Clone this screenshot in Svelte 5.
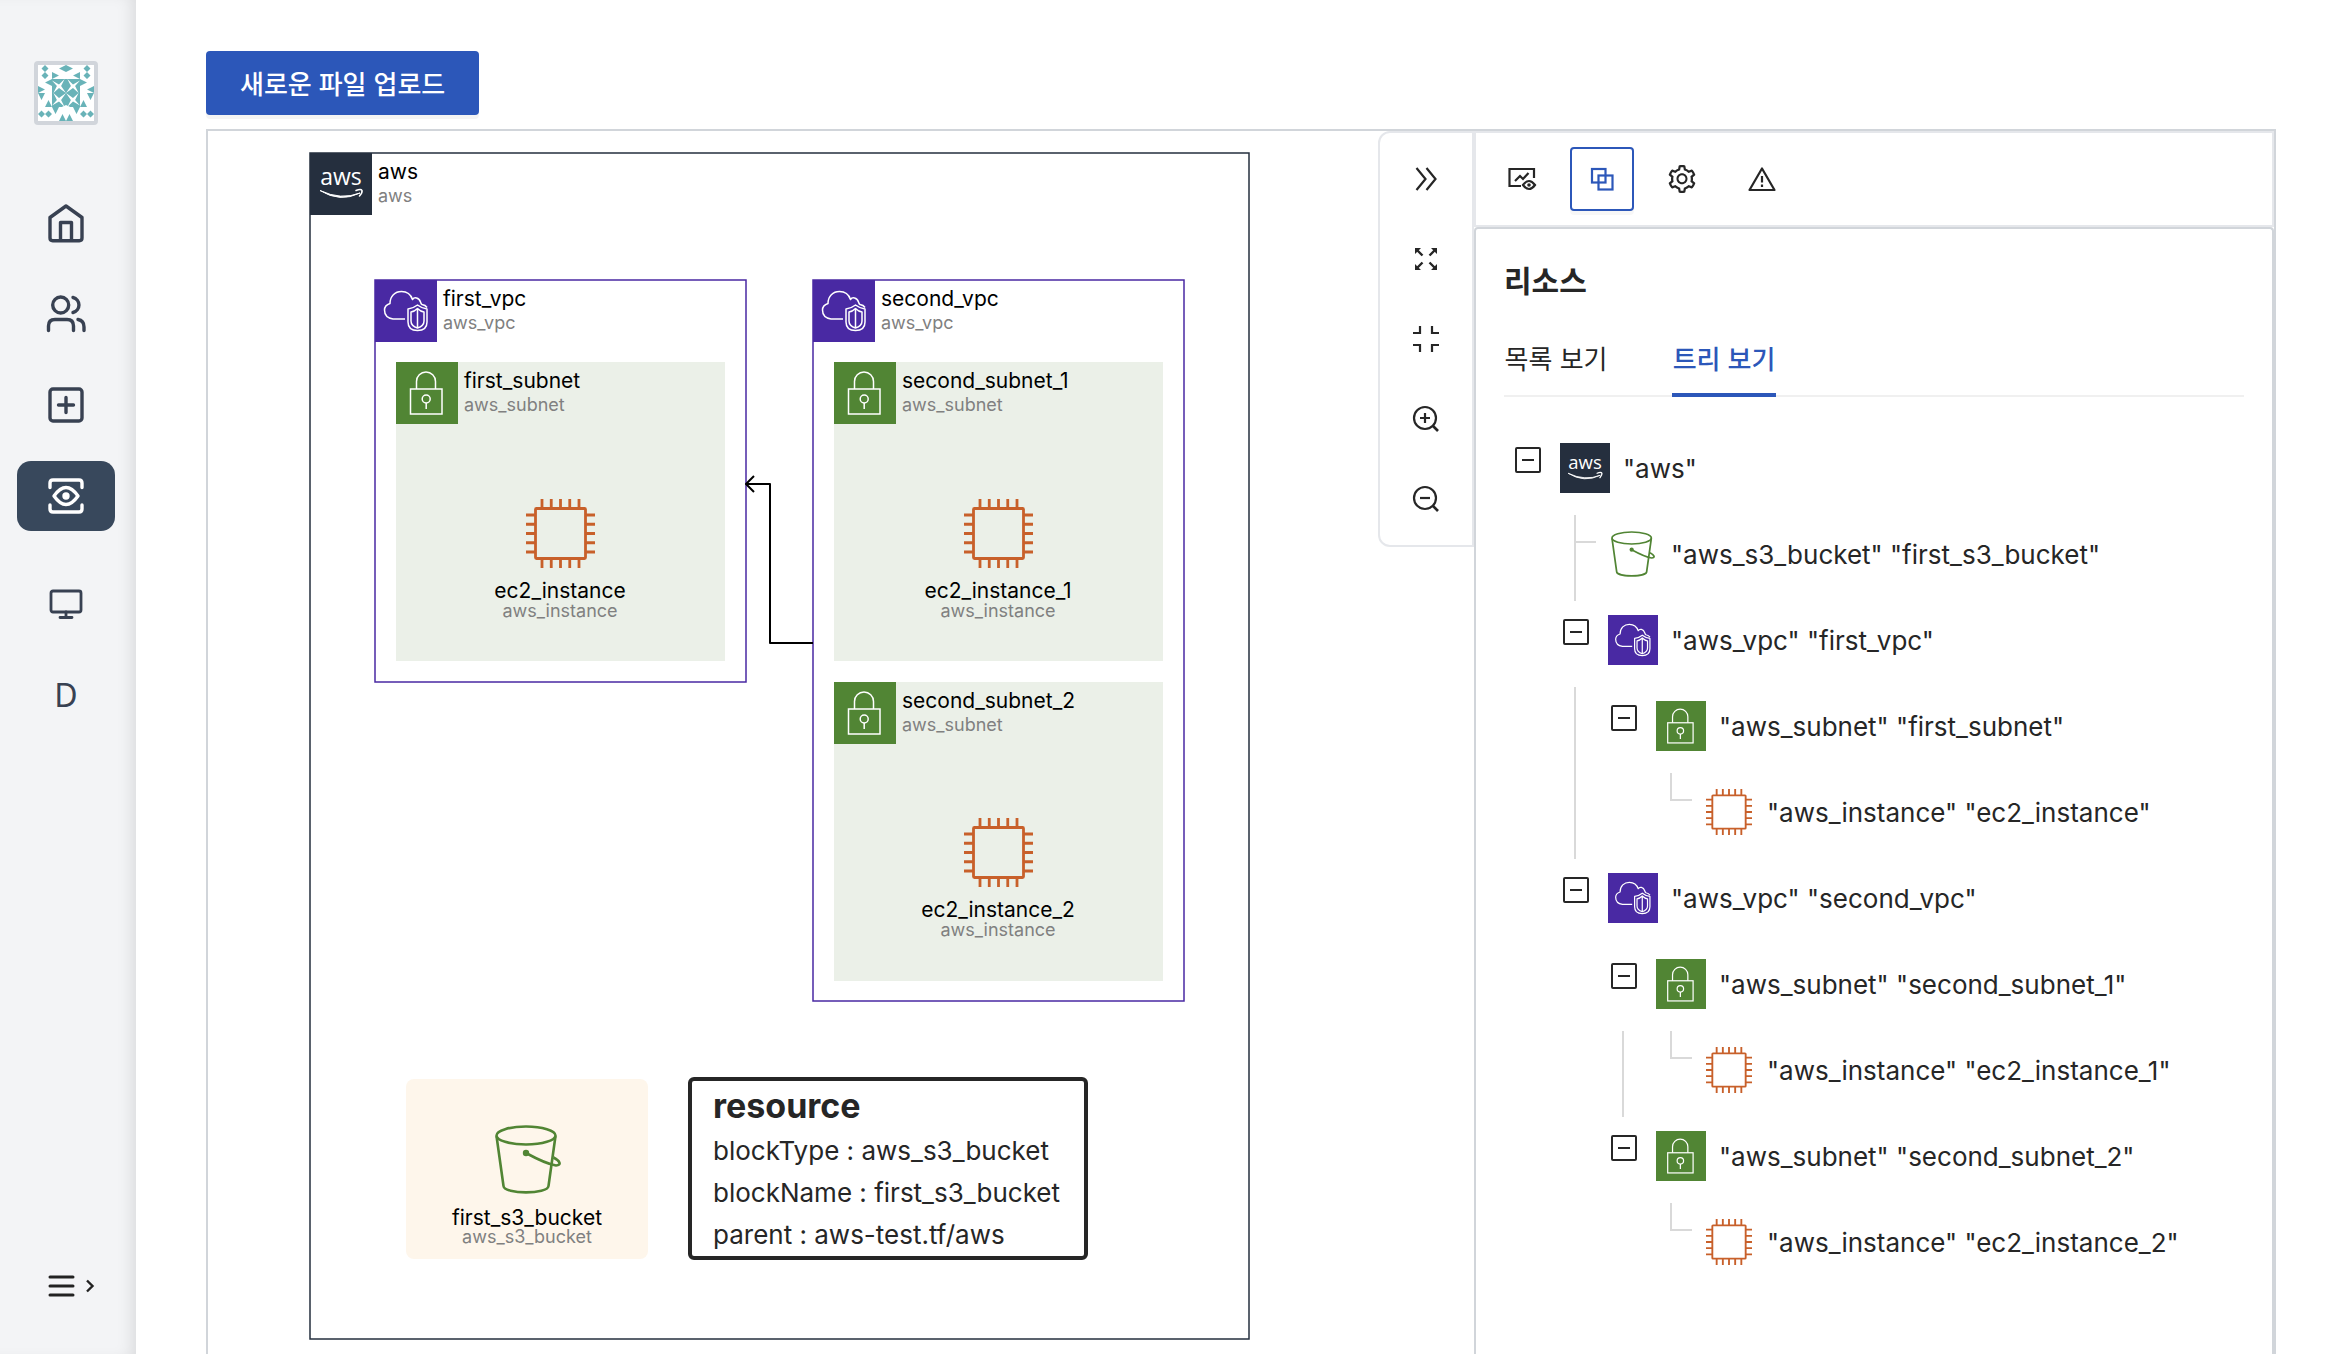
<script>
  const navItems = [
    { id: 'home', label: '홈' },
    { id: 'users', label: '사용자' },
    { id: 'add', label: '추가' },
    { id: 'view', label: '시각화' },
  ];

  const tools = [
    { id: 'collapse', label: '패널 접기' },
    { id: 'expand', label: '전체 보기' },
    { id: 'compress', label: '축소 보기' },
    { id: 'zoomIn', label: '확대' },
    { id: 'zoomOut', label: '축소' },
  ];

  const panels = [
    { id: 'preview', label: '미리보기' },
    { id: 'resource', label: '리소스' },
    { id: 'settings', label: '설정' },
    { id: 'warning', label: '경고' },
  ];

  let activePanel = $state('resource');
  let activeTab = $state('tree');

  // Indent cells: "" is blank, "line" continues an ancestor's branch.
  const treeRows = [
    { icon: 'aws', text: '"aws"', indent: [], node: 'open' },
    { icon: 's3', text: '"aws_s3_bucket" "first_s3_bucket"', indent: [''], node: 'leaf' },
    { icon: 'vpc', text: '"aws_vpc" "first_vpc"', indent: [''], node: 'open' },
    { icon: 'subnet', text: '"aws_subnet" "first_subnet"', indent: ['', 'line'], node: 'open' },
    { icon: 'ec2', text: '"aws_instance" "ec2_instance"', indent: ['', 'line', ''], node: 'last' },
    { icon: 'vpc', text: '"aws_vpc" "second_vpc"', indent: [''], node: 'open' },
    { icon: 'subnet', text: '"aws_subnet" "second_subnet_1"', indent: ['', ''], node: 'open' },
    { icon: 'ec2', text: '"aws_instance" "ec2_instance_1"', indent: ['', '', 'line'], node: 'last' },
    { icon: 'subnet', text: '"aws_subnet" "second_subnet_2"', indent: ['', ''], node: 'open' },
    { icon: 'ec2', text: '"aws_instance" "ec2_instance_2"', indent: ['', '', ''], node: 'last' },
  ];

  const groups = [
    { kind: 'aws', name: 'aws', type: 'aws', x: 102, y: 22, w: 939, h: 1186 },
    { kind: 'vpc', name: 'first_vpc', type: 'aws_vpc', x: 167, y: 149, w: 371, h: 402 },
    { kind: 'vpc', name: 'second_vpc', type: 'aws_vpc', x: 605, y: 149, w: 371, h: 721 },
    { kind: 'subnet', name: 'first_subnet', type: 'aws_subnet', x: 188, y: 231, w: 329, h: 299 },
    { kind: 'subnet', name: 'second_subnet_1', type: 'aws_subnet', x: 626, y: 231, w: 329, h: 299 },
    { kind: 'subnet', name: 'second_subnet_2', type: 'aws_subnet', x: 626, y: 551, w: 329, h: 299 },
  ];

  const instances = [
    { name: 'ec2_instance', cx: 352, cy: 402 },
    { name: 'ec2_instance_1', cx: 790, cy: 402 },
    { name: 'ec2_instance_2', cx: 790, cy: 721 },
  ];
</script>

{#snippet awsIcon(size, x = 0, y = 0)}
  <svg {x} {y} width={size} height={size} viewBox="0 0 62 62" aria-hidden="true">
    <rect width="62" height="62" fill="#252f3e" />
    <text x="31" y="32" text-anchor="middle" font-family="Open Sans, Noto Sans, sans-serif" font-size="23" font-weight="500" fill="#fff">aws</text>
    <path d="M10 37.500 Q30 50 50 40 Q31 47.500 10 37.500 Z" fill="#fff" stroke="#fff" stroke-width="1" stroke-linejoin="round" />
    <path d="M46 37.500 Q51 35.500 52 37.500 Q52.500 40 49.500 43" fill="none" stroke="#fff" stroke-width="1.600" stroke-linecap="round" stroke-linejoin="round" />
  </svg>
{/snippet}

{#snippet vpcIcon(size, x = 0, y = 0)}
  <svg {x} {y} width={size} height={size} viewBox="0 0 62 62" aria-hidden="true">
    <rect width="62" height="62" fill="#4929a3" />
    <g fill="none" stroke="#fff" stroke-width="1.500" stroke-linejoin="round">
      <path d="M30 39 H18 C12 38 9.500 34 9.500 30 C9.500 27 12 24.500 15 23.500 C15 16 20 11.500 26.500 11.500 C32 11.500 36 15 37.500 19.500 C39 17 44 17 45.500 22 C46 24 46 24 47 24.500 Q50.500 25 52 27.500" />
      <path d="M42.500 25 Q47 28.500 52 29 V42 Q52 50.500 42.500 50.500 Q33 50.500 33 42 V29 Q38 28.500 42.500 25 Z" />
      <path d="M42.500 28.500 Q45.500 31.500 49 32 V41 Q49 46 42.500 48 Q36 46 36 41 V32 Q39.500 31.500 42.500 28.500 Z M42.500 28.500 V48" />
    </g>
  </svg>
{/snippet}

{#snippet subnetIcon(size, x = 0, y = 0)}
  <svg {x} {y} width={size} height={size} viewBox="0 0 62 62" aria-hidden="true">
    <rect width="62" height="62" fill="#518534" />
    <g fill="none" stroke="#fff" stroke-width="1.500">
      <rect x="14.500" y="27" width="31.500" height="25" />
      <path d="M20.500 27 V19.500 A9.500 9.500 0 0 1 39.500 19.500 V27" />
      <circle cx="30.200" cy="37" r="4" />
      <path d="M30.200 41 V47" />
    </g>
  </svg>
{/snippet}

{#snippet ec2Icon(size, x = 0, y = 0)}
  <svg {x} {y} width={size} height={size} viewBox="0 0 69 69" aria-hidden="true">
    <g fill="none" stroke="#c8602a" stroke-width="2.800">
      <rect x="9.500" y="9.500" width="50" height="50" rx="1" />
      <path d="M16 0V9M25.250 0V9M34.500 0V9M43.750 0V9M53 0V9M16 60V69M25.250 60V69M34.500 60V69M43.750 60V69M53 60V69" />
      <path d="M0 16H9M0 25.250H9M0 34.500H9M0 43.750H9M0 53H9M60 16H69M60 25.250H69M60 34.500H69M60 43.750H69M60 53H69" />
    </g>
  </svg>
{/snippet}

{#snippet s3Icon(width, height, x = 0, y = 0)}
  <svg {x} {y} {width} {height} viewBox="0 0 66 69" aria-hidden="true">
    <g fill="none" stroke="#518534" stroke-width="2.600" stroke-linejoin="round">
      <ellipse cx="31" cy="10.500" rx="29.500" ry="9" />
      <path d="M1.500 11 L8.500 61 C9 69.500 53 69.500 53.500 61 L60.500 11" />
      <path d="M31 28 C42 34 52 39 61 40.500 C67 40 65 36 58.500 32.500" />
    </g>
    <circle cx="31" cy="28" r="3.200" fill="#518534" />
  </svg>
{/snippet}

{#snippet navIcon(id)}
  <svg width="48" height="48" viewBox="0 0 48 48" fill="none" stroke="currentColor" stroke-width="3.400" stroke-linecap="round" stroke-linejoin="round" aria-hidden="true">
    {#if id === 'home'}
      <path d="M24 7 L8 18.500 V39 Q8 41.700 10.700 41.700 H37.300 Q40 41.700 40 39 V18.500 Z" />
      <path d="M18.500 41 V23.500 H29.500 V41" />
    {:else if id === 'users'}
      <circle cx="18.700" cy="15" r="8" />
      <path d="M6.500 40.500 V36 Q6.500 29.500 13 29.500 H25 Q31.500 29.500 31.500 36 V40.500" />
      <path d="M31 7.500 A7.700 7.700 0 0 1 31 22.500" />
      <path d="M36 29.500 Q42 30.500 42 37 V40.500" />
    {:else if id === 'add'}
      <rect x="8" y="8" width="32" height="32" rx="3" />
      <path d="M16.500 24 H31.500 M24 16.500 V31.500" />
    {:else if id === 'view'}
      <path d="M8 15.500 V11 Q8 8 11 8 H37 Q40 8 40 11 V15.500 M8 33 V37 Q8 40 11 40 H37 Q40 40 40 37 V33" />
      <path d="M12 24 Q18 15.500 24 15.500 Q30 15.500 36 24 Q30 32.500 24 32.500 Q18 32.500 12 24 Z" />
      <circle cx="24" cy="24" r="2" fill="currentColor" />
    {/if}
  </svg>
{/snippet}

{#snippet toolIcon(id)}
  <svg width="32" height="32" viewBox="0 0 32 32" fill="none" stroke="currentColor" stroke-width="2.200" aria-hidden="true">
    {#if id === 'collapse'}
      <path d="M6.500 5 L15.500 16 L6.500 27 M16.500 5 L25.500 16 L16.500 27" />
    {:else if id === 'expand'}
      <path d="M7 7 L12.500 12.500 M25 7 L19.500 12.500 M7 25 L12.500 19.500 M25 25 L19.500 19.500" stroke-width="2.400" />
      <path d="M5 5 H11 L5 11 Z M27 5 H21 L27 11 Z M5 27 H11 L5 21 Z M27 27 H21 L27 21 Z" fill="currentColor" stroke="none" />
    {:else if id === 'compress'}
      <path d="M3 10 H10 V3 M29 10 H22 V3 M3 22 H10 V29 M29 22 H22 V29" />
    {:else if id === 'zoomIn' || id === 'zoomOut'}
      <circle cx="15" cy="15" r="11" />
      <path d="M22.500 22.500 L28 28" stroke-width="2.600" />
      <path d={id === 'zoomIn' ? 'M10 15 H20 M15 10 V20' : 'M10 15 H20'} />
    {:else if id === 'preview'}
      <path d="M15 23 H3.500 V6 H28 V15" />
      <path d="M9 18 L14 13 L17 16 L22.500 10" />
      <path d="M17 22 Q23 14 29 22 Q23 30 17 22 Z" />
      <circle cx="23" cy="22" r="1.800" fill="currentColor" stroke="none" />
    {:else if id === 'resource'}
      <rect x="6" y="6" width="13.500" height="13.500" />
      <rect x="12.500" y="12.500" width="14" height="14" />
    {:else if id === 'warning'}
      <path d="M16 5.500 L28.500 27 H3.500 Z" stroke-linejoin="round" />
      <path d="M16 13 V19.500 M16 21.500 V24" />
    {/if}
  </svg>
{/snippet}

{#snippet gearIcon()}
  <svg width="28" height="28" viewBox="64 64 896 896" fill="currentColor" aria-hidden="true">
    <path d="M924.8 625.7l-65.5-56c3.1-19 4.7-38.4 4.7-57.8s-1.6-38.8-4.7-57.8l65.5-56a32.03 32.03 0 009.3-35.2l-.9-2.6a443.74 443.74 0 00-79.7-137.9l-1.8-2.1a32.12 32.12 0 00-35.1-9.5l-81.3 28.9c-30-24.6-63.5-44-99.7-57.6l-15.7-85a32.05 32.05 0 00-25.8-25.7l-2.7-.5c-52.1-9.4-106.9-9.4-159 0l-2.7.5a32.05 32.05 0 00-25.8 25.7l-15.8 85.4a351.86 351.86 0 00-99 57.4l-81.9-29.1a32 32 0 00-35.1 9.500l-1.8 2.1a446.02 446.02 0 00-79.7 137.9l-.9 2.6c-4.5 12.5-.8 26.5 9.3 35.2l66.3 56.6c-3.1 18.8-4.6 38-4.6 57.1 0 19.2 1.5 38.4 4.6 57.1L99 625.5a32.03 32.03 0 00-9.3 35.2l.9 2.6c18.1 50.4 44.9 96.9 79.7 137.9l1.8 2.1a32.12 32.12 0 0035.1 9.5l81.9-29.1c29.8 24.5 63.1 43.9 99 57.4l15.8 85.4a32.05 32.05 0 0025.8 25.7l2.7.5a449.4 449.4 0 00159 0l2.7-.5a32.05 32.05 0 0025.8-25.7l15.7-85a350 350 0 0099.7-57.6l81.3 28.9a32 32 0 0035.1-9.5l1.8-2.1c34.8-41.1 61.6-87.5 79.7-137.9l.9-2.6c4.5-12.3.8-26.3-9.3-35zM788.3 465.9c2.5 15.1 3.8 30.6 3.8 46.1s-1.3 31-3.8 46.1l-6.6 40.1 74.700 63.900a370.03 370.03 0 01-42.600 73.600L721 702.8l-31.400 25.800c-23.900 19.600-50.500 35-79.300 45.800l-38.100 14.300-17.900 97a377.5 377.5 0 01-85 0l-17.9-97.2-37.8-14.5c-28.5-10.8-55-26.2-78.7-45.7l-31.4-25.9-93.4 33.2c-17-22.9-31.2-47.6-42.6-73.6l75.5-64.5-6.5-40c-2.4-14.9-3.7-30.3-3.7-45.5 0-15.3 1.2-30.6 3.7-45.5l6.5-40-75.5-64.5c11.3-26.1 25.6-50.7 42.6-73.6l93.4 33.2 31.4-25.9c23.7-19.5 50.2-34.9 78.7-45.7l37.9-14.3 17.9-97.2c28.1-3.2 56.8-3.2 85 0l17.9 97 38.1 14.3c28.7 10.8 55.4 26.2 79.3 45.8l31.4 25.8 92.8-32.9c17 22.9 31.2 47.6 42.6 73.6L781.8 426l6.5 39.9zM512 326c-97.2 0-176 78.8-176 176s78.8 176 176 176 176-78.8 176-176-78.8-176-176-176zm79.2 255.2A111.6 111.6 0 01512 614c-29.900 0-58-11.700-79.200-32.800A111.6 111.6 0 01400 502c0-29.900 11.700-58 32.800-79.200C454 401.6 482.1 390 512 390c29.900 0 58 11.600 79.200 32.800A111.6 111.6 0 01624 502c0 29.900-11.700 58-32.800 79.200z" />
  </svg>
{/snippet}

<div class="app">
  <aside class="sidebar">
    <div class="avatar">
      <svg width="56" height="56" viewBox="0 0 8 8" aria-hidden="true">
        <rect width="8" height="8" fill="#fff" />
        <g fill="#69b3b8">
          <path d="M1 0l.5.5-.5.5-.5-.5zM7 0l.5.5-.5.5-.5-.5zM1 1l.5.5-.5.5-.5-.5zM7 1l.5.5-.5.5-.5-.5zM4 0l1 .5-1 .5-1-.5z" />
          <path d="M.5 6.500l.5.5-.5.5L0 7zM1.500 6.500l.5.5-.5.5L1 7zM6.500 6.500l.5.5-.5.5L6 7zM7.500 6.500l.5.5-.5.5L7 7z" />
          <path d="M3 8l.5-1 .5 1 .5-1 .5 1z" />
          <path d="M2 1l1 .5-1 .5zM6 1l-1 .5 1 .5zM1 2.500L2 2v1zM7 2.500L6 2v1zM0 3l1 .5-1 .5zM8 3l-1 .5 1 .5z" />
          <path d="M0 4h1l-.5 1zM8 4H7l.5 1zM1 6l.5-1 .5 1zM6 6l.5-1 .5 1zM2 6h1l-.5 1zM5 6h1l-.5 1z" />
          <rect x="2" y="2" width="4" height="4" />
        </g>
        <g fill="#fff">
          <path d="M2 2.200L3 2.800 3.800 2 3.300 3 4 4 3 3.300 2.200 4 2.700 3z" />
          <path d="M6 2.200L5 2.800 4.200 2 4.700 3 4 4 5 3.300 5.800 4 5.300 3z" />
          <path d="M2 5.800L3 5.200 3.800 6 3.300 5 4 4 3 4.700 2.200 4 2.700 5z" />
          <path d="M6 5.800L5 5.200 4.200 6 4.700 5 4 4 5 4.700 5.800 4 5.300 5z" />
          <path d="M3.400 6h1.200L4 5.700z" />
        </g>
      </svg>
    </div>
    <nav class="nav">
      {#each navItems as item}
        <a class="nav-link" class:active={item.id === 'view'} href="#{item.id}" aria-label={item.label}>
          {@render navIcon(item.id)}
        </a>
      {/each}
    </nav>
    <div class="nav-extra">
      <a class="nav-link" href="#monitor" aria-label="모니터">
        <svg width="36" height="32" viewBox="0 0 36 32" fill="none" stroke="currentColor" stroke-width="2.800" stroke-linecap="round" stroke-linejoin="round" aria-hidden="true">
          <rect x="3" y="3" width="30" height="21" rx="2" />
          <path d="M18 24 V29.500 M12 29.500 H24" />
        </svg>
      </a>
      <a class="nav-link letter" href="#d">D</a>
    </div>
    <button class="menu" aria-label="메뉴 펼치기">
      <svg width="48" height="28" viewBox="0 0 48 28" fill="none" stroke="#222" stroke-linecap="round" aria-hidden="true">
        <path d="M3 5 H26 M3 14 H26 M3 23 H26" stroke-width="3" />
        <path d="M40 8.500 L45.500 14 L40 19.500" stroke-width="2.400" stroke-linecap="butt" />
      </svg>
    </button>
  </aside>

  <main class="main">
    <button class="upload">새로운 파일 업로드</button>

    <div class="workspace">
      <section class="canvas">
        <svg class="diagram" width="100%" height="1223">
          {#each groups as g}
            <rect class="group {g.kind}" x={g.x} y={g.y} width={g.w} height={g.h} />
            {#if g.kind === 'aws'}
              {@render awsIcon(62, g.x, g.y)}
            {:else if g.kind === 'vpc'}
              {@render vpcIcon(62, g.x, g.y)}
            {:else}
              {@render subnetIcon(62, g.x, g.y)}
            {/if}
            <text class="name" x={g.x + 68} y={g.y + 26}>{g.name}</text>
            <text class="type" x={g.x + 68} y={g.y + 49}>{g.type}</text>
          {/each}
          <g class="link">
            <path d="M605 512 H562 V353 H539" />
            <path d="M546 345 L538 353 L546 361" />
          </g>
          {#each instances as n}
            {@render ec2Icon(69, n.cx - 34, n.cy - 34)}
            <text class="name middle" x={n.cx} y={n.cy + 65}>{n.name}</text>
            <text class="type middle" x={n.cx} y={n.cy + 84}>aws_instance</text>
          {/each}
          <rect class="bucket" x="198" y="948" width="242" height="180" rx="8" />
          {@render s3Icon(66, 69, 287, 994)}
          <text class="name middle" x="319" y="1094">first_s3_bucket</text>
          <text class="type middle" x="319" y="1112">aws_s3_bucket</text>
        </svg>
        <div class="tooltip">
          <h2>resource</h2>
          <p>blockType : aws_s3_bucket</p>
          <p>blockName : first_s3_bucket</p>
          <p>parent : aws-test.tf/aws</p>
        </div>
      </section>

      <div class="toolbar">
        {#each tools as tool}
          <button class="tool" aria-label={tool.label}>{@render toolIcon(tool.id)}</button>
        {/each}
      </div>

      <section class="side">
        <div class="side-head">
          {#each panels as p}
            <button class="tool" class:selected={activePanel === p.id} aria-label={p.label} onclick={() => (activePanel = p.id)}>
              {#if p.id === 'settings'}
                {@render gearIcon()}
              {:else}
                {@render toolIcon(p.id)}
              {/if}
            </button>
          {/each}
        </div>
        <div class="side-body">
          <h1>리소스</h1>
          <div class="tabs" role="tablist">
            <button role="tab" class="tab" class:on={activeTab === 'list'} aria-selected={activeTab === 'list'} onclick={() => (activeTab = 'list')}>목록 보기</button>
            <button role="tab" class="tab" class:on={activeTab === 'tree'} aria-selected={activeTab === 'tree'} onclick={() => (activeTab = 'tree')}>트리 보기</button>
          </div>
          <ul class="tree">
            {#each treeRows as row}
              <li class="row">
                {#each row.indent as cell}
                  <span class="cell {cell}"></span>
                {/each}
                {#if row.node === 'open'}
                  <button class="switcher" aria-label="접기">
                    <svg width="26" height="26" viewBox="0 0 26 26" fill="none" stroke="#262626" stroke-width="2" aria-hidden="true">
                      <rect x="1" y="1" width="24" height="24" rx="1" />
                      <path d="M7 13 H19" />
                    </svg>
                  </button>
                {:else}
                  <span class="cell {row.node}"></span>
                {/if}
                <span class="row-icon">
                  {#if row.icon === 'aws'}
                    {@render awsIcon(50)}
                  {:else if row.icon === 'vpc'}
                    {@render vpcIcon(50)}
                  {:else if row.icon === 'subnet'}
                    {@render subnetIcon(50)}
                  {:else if row.icon === 'ec2'}
                    {@render ec2Icon(46)}
                  {:else}
                    {@render s3Icon(44, 46)}
                  {/if}
                </span>
                <span class="row-text">{row.text}</span>
              </li>
            {/each}
          </ul>
        </div>
      </section>
    </div>
  </main>
</div>

<style>
  :global(body) {
    margin: 0;
    background: #fff;
  }

  .app {
    display: flex;
    height: 100vh;
    overflow: hidden;
    font-family: Inter, 'Noto Sans CJK KR', sans-serif;
    font-size: 26px;
    color: #262626;
  }

  button {
    font: inherit;
    color: inherit;
    background: none;
    border: 0;
    padding: 0;
    cursor: pointer;
  }

  svg {
    display: block;
    flex: none;
  }

  .sidebar {
    flex: none;
    width: 136px;
    box-sizing: border-box;
    padding: 61px 4px 54px 0;
    display: flex;
    flex-direction: column;
    align-items: center;
    background: #f3f4f6;
    box-shadow: inset -12px 0 16px -8px rgba(0, 0, 0, 0.1);
    color: #384152;
  }

  .avatar {
    border: 4px solid #d1d5db;
    border-radius: 4px;
  }

  .nav {
    display: flex;
    flex-direction: column;
    gap: 21px;
    margin-top: 63px;
  }

  .nav-link {
    display: flex;
    align-items: center;
    justify-content: center;
    width: 98px;
    height: 70px;
    border-radius: 14px;
    color: inherit;
    text-decoration: none;
  }

  .nav-link.active {
    background: #38485c;
    color: #fff;
  }

  .nav-extra {
    display: flex;
    flex-direction: column;
    gap: 21px;
    margin-top: 38px;
  }

  .letter {
    font-family: 'Noto Sans', sans-serif;
    font-size: 32px;
    line-height: 40px;
  }

  .menu {
    margin-top: auto;
    padding-left: 10px;
  }

  .main {
    flex: 1;
    min-width: 0;
    display: flex;
    flex-direction: column;
    align-items: flex-start;
    padding: 51px 64px 0 70px;
  }

  .upload {
    flex: none;
    height: 64px;
    padding: 0 34px 2px;
    border-radius: 4px;
    background: #2c57b9;
    color: #fff;
    font-weight: 500;
    box-shadow: 0 4px 0 rgba(0, 0, 0, 0.045);
  }

  .workspace {
    flex: 1;
    min-height: 0;
    align-self: stretch;
    display: flex;
    align-items: flex-start;
    margin-top: 14px;
    border: 2px solid #d1d5da;
    border-bottom: 0;
  }

  .canvas {
    position: relative;
    flex: 1;
    min-width: 0;
    align-self: stretch;
    overflow: hidden;
  }

  .group {
    fill: #fff;
    stroke-width: 1.5;
  }

  .group.aws {
    stroke: #252f3e;
  }

  .group.vpc {
    stroke: #4929a3;
  }

  .group.subnet {
    fill: #ebf0e8;
  }

  .bucket {
    fill: #fef6eb;
  }

  .name {
    font-size: 21px;
    fill: #000;
  }

  .type {
    font-size: 18px;
    fill: #808080;
  }

  .middle {
    text-anchor: middle;
  }

  .link {
    fill: none;
    stroke: #000;
    stroke-width: 2;
    stroke-linejoin: round;
  }

  .tooltip {
    position: absolute;
    left: 480px;
    top: 946px;
    padding: 1px 24px 0 21px;
    border: 4px solid #262626;
    border-radius: 6px;
    background: #fff;
  }

  .tooltip h2 {
    margin: 0;
    font-size: 34px;
    line-height: 48px;
    font-weight: 700;
  }

  .tooltip p {
    margin: 0;
    line-height: 42px;
  }

  .toolbar {
    flex: none;
    display: flex;
    flex-direction: column;
    gap: 16px;
    padding: 14px;
    border: 2px solid #e5e7eb;
    border-radius: 12px 0 0 12px;
    background: #fff;
  }

  .tool {
    display: flex;
    align-items: center;
    justify-content: center;
    width: 64px;
    height: 64px;
  }

  .tool.selected {
    box-sizing: border-box;
    border: 2px solid #2c57b9;
    border-radius: 4px;
    color: #2c57b9;
    box-shadow: 0 4px 0 rgba(0, 0, 0, 0.03);
  }

  .side {
    flex: 0 0 800px;
    align-self: stretch;
    display: flex;
    flex-direction: column;
  }

  .side-head {
    flex: none;
    display: flex;
    gap: 16px;
    padding: 14px;
    border: 2px solid #e5e7eb;
  }

  .side-body {
    flex: 1;
    min-height: 0;
    overflow: hidden;
    padding: 28px 28px 0;
    border: 2px solid #d1d5da;
    border-bottom: 0;
    border-radius: 4px 4px 0 0;
  }

  h1 {
    margin: 0;
    font-size: 30px;
    line-height: 48px;
    font-weight: 700;
  }

  .tabs {
    display: flex;
    gap: 64px;
    margin-top: 16px;
    box-shadow: inset 0 -2px 0 #f0f0f0;
  }

  .tab {
    min-width: 104px;
    height: 76px;
    box-sizing: border-box;
    border-bottom: 4px solid transparent;
    white-space: nowrap;
  }

  .tab.on {
    border-color: #2c57b9;
    color: #2c57b9;
    font-weight: 500;
  }

  .tree {
    list-style: none;
    margin: 32px 0 0;
    padding: 0;
  }

  .row {
    display: flex;
    align-items: flex-start;
    height: 86px;
  }

  .cell {
    position: relative;
    flex: none;
    width: 48px;
    height: 86px;
  }

  .cell.line::before,
  .cell.leaf::before,
  .cell.last::before {
    content: '';
    position: absolute;
    left: 22px;
    top: 0;
    bottom: 0;
    border-left: 2px solid #d9d9d9;
  }

  .cell.last::before {
    bottom: 58px;
  }

  .cell.leaf::after,
  .cell.last::after {
    content: '';
    position: absolute;
    left: 22px;
    top: 26px;
    width: 22px;
    border-top: 2px solid #d9d9d9;
  }

  .switcher {
    flex: none;
    width: 48px;
    height: 62px;
    display: flex;
    align-items: center;
    justify-content: center;
  }

  .row-icon {
    flex: none;
    width: 50px;
    height: 50px;
    margin: 14px 13px 0 8px;
    display: flex;
    align-items: center;
    justify-content: center;
  }

  .row-text {
    padding-top: 19px;
    line-height: 42px;
    white-space: nowrap;
  }
</style>
